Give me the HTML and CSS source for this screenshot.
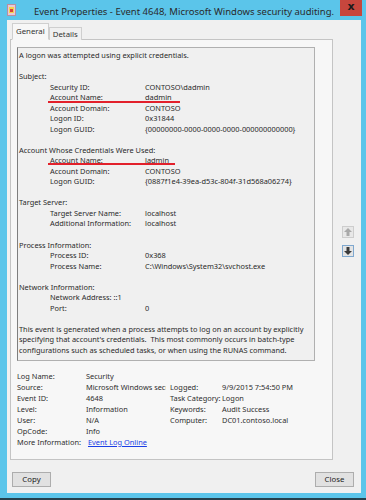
FILE: index.html
```html
<!DOCTYPE html>
<html lang="en">
<head>
    <meta charset="UTF-8">
    <title>Event Properties</title>
    <link rel="stylesheet" href="styles.css">
</head>
<body>

<div class="window">
    <!-- title bar -->
    <div class="titlebar">
        <span class="app-icon">
            <svg width="9" height="12" viewBox="0 0 9 12">
                <rect x="0.5" y="0.5" width="8" height="11" fill="#e8c9d6" stroke="#b78fa0"/>
                <rect x="2" y="3" width="5" height="6" fill="#f2d64b"/>
                <rect x="3" y="5" width="3" height="3" fill="#d9413a"/>
            </svg>
        </span>
        <span class="title">Event Properties - Event 4648, Microsoft Windows security auditing.</span>
        <span class="close-x">x</span>
    </div>

    <div class="client">
        <div class="main-row">
            <div class="tab-col">
                <div class="tabs">
                    <div class="tab active">General</div>
                    <div class="tab">Details</div>
                </div>

                <div class="panel">
                    <!-- event description -->
                    <div class="desc">
                        <div class="line">A logon was attempted using explicit credentials.</div>

                        <div class="group">
                            <div class="line">Subject:</div>
                            <div class="kv"><span>Security ID:</span><span>CONTOSO\dadmin</span></div>
                            <div class="kv mark mark-a"><span>Account Name:</span><span>dadmin</span></div>
                            <div class="kv"><span>Account Domain:</span><span>CONTOSO</span></div>
                            <div class="kv"><span>Logon ID:</span><span>0x31844</span></div>
                            <div class="kv"><span>Logon GUID:</span><span>{00000000-0000-0000-0000-000000000000}</span></div>
                        </div>

                        <div class="group">
                            <div class="line">Account Whose Credentials Were Used:</div>
                            <div class="kv mark mark-b"><span>Account Name:</span><span>ladmin</span></div>
                            <div class="kv"><span>Account Domain:</span><span>CONTOSO</span></div>
                            <div class="kv"><span>Logon GUID:</span><span>{0887f1e4-39ea-d53c-804f-31d568a06274}</span></div>
                        </div>

                        <div class="group">
                            <div class="line">Target Server:</div>
                            <div class="kv"><span>Target Server Name:</span><span>localhost</span></div>
                            <div class="kv"><span>Additional Information:</span><span>localhost</span></div>
                        </div>

                        <div class="group">
                            <div class="line">Process Information:</div>
                            <div class="kv"><span>Process ID:</span><span>0x368</span></div>
                            <div class="kv"><span>Process Name:</span><span>C:\Windows\System32\svchost.exe</span></div>
                        </div>

                        <div class="group">
                            <div class="line">Network Information:</div>
                            <div class="kv"><span>Network Address: ::1</span><span></span></div>
                            <div class="kv"><span>Port:</span><span>0</span></div>
                        </div>

                        <div class="group">
                            <div class="line">This event is generated when a process attempts to log on an account by explicitly</div>
                            <div class="line">specifying that account's credentials.&nbsp; This most commonly occurs in batch-type</div>
                            <div class="line">configurations such as scheduled tasks, or when using the RUNAS command.</div>
                        </div>
                    </div>

                    <!-- event fields -->
                    <div class="fields">
                        <span>Log Name:</span><span>Security</span><span></span><span></span>
                        <span>Source:</span><span class="clip">Microsoft Windows security</span><span>Logged:</span><span>9/9/2015 7:54:50 PM</span>
                        <span>Event ID:</span><span>4648</span><span>Task Category:</span><span>Logon</span>
                        <span>Level:</span><span>Information</span><span>Keywords:</span><span>Audit Success</span>
                        <span>User:</span><span>N/A</span><span>Computer:</span><span>DC01.contoso.local</span>
                        <span>OpCode:</span><span>Info</span><span></span><span></span>
                        <span>More Information:</span><span class="wide"><a href="#" class="link">Event Log Online</a></span>
                    </div>
                </div>
            </div>

            <!-- previous / next event -->
            <div class="nav-col">
                <span class="nav-btn">
                    <svg width="8" height="8" viewBox="0 0 8 8"><path d="M4 0 L8 4 L5.5 4 L5.5 8 L2.5 8 L2.5 4 L0 4 Z" fill="#a9a9a9"/></svg>
                </span>
                <span class="nav-btn focus">
                    <svg width="8" height="8" viewBox="0 0 8 8"><path d="M4 8 L8 4 L5.5 4 L5.5 0 L2.5 0 L2.5 4 L0 4 Z" fill="#3a3a3a"/></svg>
                </span>
            </div>
        </div>

        <div class="buttons">
            <button class="btn">Copy</button>
            <button class="btn">Close</button>
        </div>
    </div>
</div>

</body>
</html>
```

FILE: styles.css
```css
body {
    margin: 0;
    padding: 0;
    font-family: "Noto Sans", "Open Sans", sans-serif;
    color: #222;
}

.window {
    width: 366px;
    height: 500px;
    box-sizing: border-box;
    background-color: #5bc5ea;
    padding: 0 5px 5px 7px;
    border-bottom: 2px solid #24404c;
    display: flex;
    flex-direction: column;
}

.titlebar {
    height: 22px;
    display: flex;
    align-items: flex-start;
}

.app-icon {
    margin-top: 4px;
    width: 9px;
    height: 12px;
    display: flex;
}

.title {
    margin-left: 18px;
    margin-top: 4px;
    font-size: 9.5px;
    line-height: 15px;
    color: #2a2a2a;
    white-space: nowrap;
}

.close-x {
    margin-left: auto;
    margin-right: -1px;
    width: 22px;
    height: 16px;
    background-color: #c7463d;
    color: #1a1a1a;
    font-weight: bold;
    font-size: 11px;
    line-height: 13px;
    text-align: center;
    font-family: "DejaVu Sans", sans-serif;
}

.client {
    flex-grow: 1;
    background-color: #f0f0f0;
    padding: 3px 7px 6px 3px;
    display: flex;
    flex-direction: column;
    font-size: 7.4px;
}

.main-row {
    display: flex;
    align-items: center;
}

.tab-col {
    width: 323px;
    display: flex;
    flex-direction: column;
}

.tabs {
    display: flex;
    align-items: flex-end;
    padding-left: 2px;
    margin-bottom: -1px;
    position: relative;
    z-index: 1;
}

.tab {
    height: 12px;
    line-height: 12px;
    padding: 0 3px;
    border: 1px solid #cfcfcf;
    border-bottom: none;
    background-color: #f0f0f0;
    color: #333;
    font-size: 7.8px;
}

.tab.active {
    height: 15px;
    line-height: 15px;
    padding: 0 3px;
    background-color: #f7f7f7;
    border-bottom: 1px solid #f7f7f7;
}

.panel {
    height: 421px;
    box-sizing: border-box;
    border: 1px solid #c4c4c4;
    background-color: #f7f7f7;
    padding: 7px 0 0 6px;
}

.desc {
    width: 298px;
    height: 314px;
    box-sizing: border-box;
    border: 1px solid #b0b0b0;
    border-left-color: #7e7e7e;
    padding: 2px 0 0 1px;
    background-color: #f0f0f0;
    line-height: 10.53px;
    color: #2a2a2a;
    overflow: hidden;
}

.line {
    white-space: nowrap;
}

.group {
    margin-top: 10.53px;
}

.kv {
    display: grid;
    grid-template-columns: 95px 1fr;
    padding-left: 31px;
    white-space: nowrap;
}

.mark {
    position: relative;
}

.mark::after {
    content: "";
    position: absolute;
    left: 29px;
    bottom: 0;
    height: 2px;
    background-color: #e2202b;
}

.mark-a::after {
    width: 132px;
}

.mark-b::after {
    width: 127px;
    bottom: 1px;
}

.fields {
    margin-top: 10px;
    display: grid;
    grid-template-columns: 69px 80px 56px 1fr;
    line-height: 11px;
    color: #2e2e2e;
    white-space: nowrap;
}

.fields span:nth-child(4n+3) {
    padding-left: 4px;
}

.clip {
    overflow: hidden;
}

.wide {
    grid-column: span 3;
}

.link {
    color: #1a3ee6;
    margin-left: 2px;
}

.nav-col {
    margin-left: 9px;
    display: flex;
    flex-direction: column;
    gap: 7px;
}

.nav-btn {
    width: 12px;
    height: 12px;
    box-sizing: border-box;
    border: 1px solid #cdcdcd;
    background-color: #e8e8e8;
    display: flex;
    align-items: center;
    justify-content: center;
}

.nav-btn.focus {
    border-color: #7fa8cf;
    background-color: #e4e4e4;
}

.buttons {
    margin-top: 12px;
    padding-left: 2px;
    display: flex;
    justify-content: space-between;
}

.btn {
    width: 39px;
    height: 15px;
    padding: 0;
    border: 1px solid #adadad;
    background-color: #e1e1e1;
    font-family: "Noto Sans", "Open Sans", sans-serif;
    font-size: 7.8px;
    color: #222;
    line-height: 13px;
}
```
